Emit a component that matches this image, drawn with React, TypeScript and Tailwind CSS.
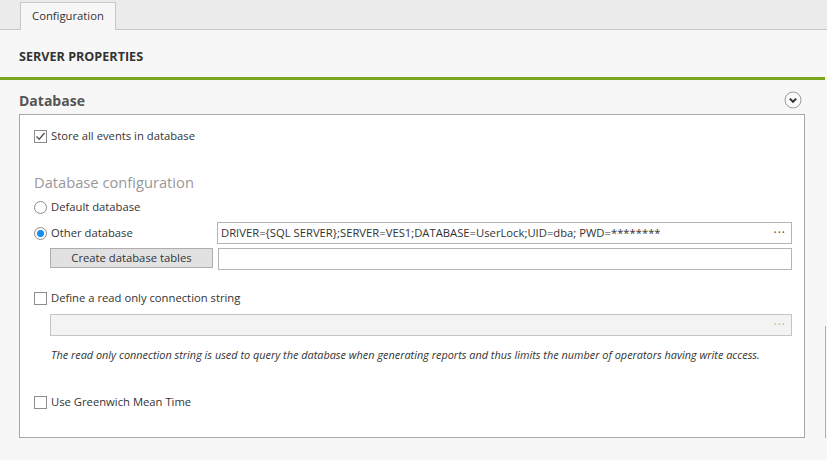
import React from 'react';

const font = { fontFamily: '"Open Sans", "Noto Sans", Arial, sans-serif' };

function Checkbox({ checked = false }: { checked?: boolean }) {
  return (
    <span className="flex h-[13px] w-[13px] shrink-0 items-center justify-center border border-[#8c8c8c] bg-white">
      {checked && (
        <svg width="11" height="11" viewBox="0 0 11 11">
          <path d="M1.5 5.5 L4.2 8.3 L9.5 2" fill="none" stroke="#555" strokeWidth="1.4" />
        </svg>
      )}
    </span>
  );
}

function Radio({ checked = false }: { checked?: boolean }) {
  return (
    <span className="flex h-[13px] w-[13px] shrink-0 items-center justify-center rounded-full border border-[#8c8c8c] bg-white">
      {checked && <span className="h-[7px] w-[7px] rounded-full bg-[#1a8cf0]" />}
    </span>
  );
}

function Dots({ light = false }: { light?: boolean }) {
  return (
    <span className={`text-[12px] leading-none tracking-[1px] ${light ? 'text-[#b0b0b0]' : 'text-[#444]'}`}>···</span>
  );
}

export default function App() {
  return (
    <div className="h-[460px] w-[827px] overflow-hidden bg-[#f7f7f7] text-[11.25px] text-[#333]" style={font}>
      {/* Tab strip */}
      <div className="flex h-[30px] items-end border-b border-[#c8c8c8] bg-[#ebebeb]">
        <div className="relative top-[1px] ml-[20px] flex h-[28px] w-[96px] items-center justify-center border border-b-0 border-[#c8c8c8] bg-[#f7f7f7] text-[11.25px] text-[#333]">
          Configuration
        </div>
      </div>

      <div className="flex">
        <div className="flex-1">
          {/* Section header */}
          <div className="flex h-[47px] items-center pl-[19px] pt-[7px] text-[12.6px] font-bold text-[#333]">
            SERVER PROPERTIES
          </div>
          <div className="h-[3px] bg-[#7aa61b]" />

          {/* Database group */}
          <div className="flex h-[34px] items-center justify-between pl-[19px] pr-[23px] pt-[7px]">
            <span className="text-[14px] font-bold text-[#555]">Database</span>
            <svg width="18" height="18" viewBox="0 0 18 18" className="-mt-[2px]">
              <circle cx="9" cy="9" r="8" fill="#fafafa" stroke="#9a9a9a" strokeWidth="1" />
              <path d="M5.8 7.6 L9 10.8 L12.2 7.6" fill="none" stroke="#333" strokeWidth="2" />
            </svg>
          </div>

          <div className="ml-[19px] h-[324px] w-[786px] border border-[#a8a8a8] bg-white pl-[14px] pr-[12px]">
            <label className="mt-[11px] flex h-[20px] items-center gap-[4px]">
              <Checkbox checked />
              <span>Store all events in database</span>
            </label>

            <div className="mt-[25px] flex h-[22px] items-center text-[14.7px] text-[#999]">Database configuration</div>

            <label className="mt-[4px] flex h-[20px] items-center gap-[4px]">
              <Radio />
              <span>Default database</span>
            </label>

            <div className="mt-[5px] flex h-[22px] items-center">
              <label className="flex w-[183px] items-center gap-[4px]">
                <Radio checked />
                <span>Other database</span>
              </label>
              <div className="flex h-[22px] flex-1 items-center justify-between border border-[#b4b4b4] bg-white pl-[3px] pr-[5px]">
                <span>DRIVER={'{'}SQL SERVER{'}'};SERVER=VES1;DATABASE=UserLock;UID=dba; PWD=********</span>
                <Dots />
              </div>
            </div>

            <div className="mt-[4px] flex h-[22px] items-start pl-[16px]">
              <button className="h-[20px] w-[163px] border border-[#adadad] bg-[#e1e1e1] text-[11.25px] text-[#333]">
                Create database tables
              </button>
              <div className="ml-[5px] h-[22px] flex-1 border border-[#b4b4b4] bg-white" />
            </div>

            <label className="mt-[18px] flex h-[20px] items-center gap-[4px]">
              <Checkbox />
              <span>Define a read only connection string</span>
            </label>

            <div className="ml-[16px] mt-[6px] flex h-[22px] items-center justify-end border border-[#c4c4c4] bg-[#f3f3f3] pr-[5px]">
              <Dots light />
            </div>

            <div className="ml-[17px] mt-[11px] flex h-[16px] items-center text-[10.9px] italic text-[#333]">
              The read only connection string is used to query the database when generating reports and thus limits the number of operators having write access.
            </div>

            <label className="mt-[29px] flex h-[20px] items-center gap-[4px]">
              <Checkbox />
              <span>Use Greenwich Mean Time</span>
            </label>
          </div>
        </div>
        <div className="mt-[296px] w-[2px] border-l border-[#b0b0b0]" />
      </div>
    </div>
  );
}
